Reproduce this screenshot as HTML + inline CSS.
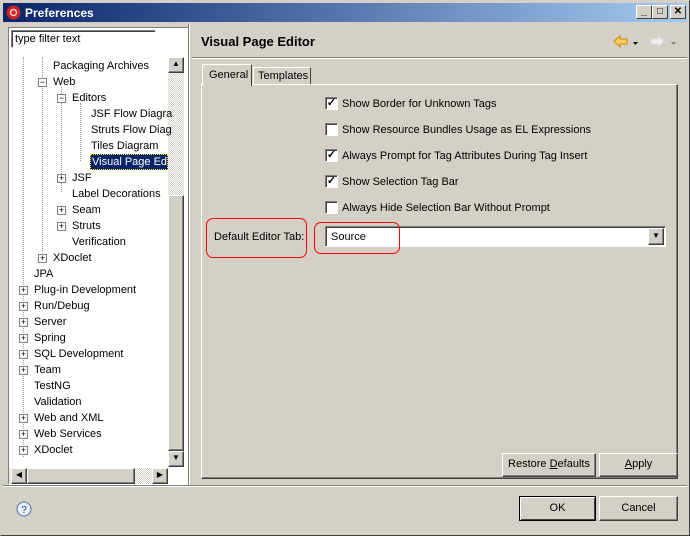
<!DOCTYPE html><html><head><style>
*{box-sizing:border-box;margin:0;padding:0}
body{width:690px;height:536px;background:#d4d0c8;font-family:"Liberation Sans",sans-serif;font-size:11px;color:#000;position:relative;overflow:hidden}
.a{position:absolute}
.win{left:0;top:0;width:690px;height:536px;border:1px solid #404040;border-top-color:#d4d0c8;border-left-color:#d4d0c8}
.tb{left:3px;top:3px;width:684px;height:19px;background:linear-gradient(90deg,#0a246a,#a6caf0)}
.tb span{position:absolute;left:22px;top:3px;color:#fff;font-weight:bold;font-size:12px}
.cb{top:5px;width:16px;height:14px;background:#d4d0c8;border:1px solid;border-color:#fff #404040 #404040 #fff;font-size:10px;text-align:center;line-height:12px;font-weight:bold}
.tree{left:8px;top:27px;width:181px;height:458px;background:#fff;border:1px solid;border-color:#808080 #fff #fff #808080}
.t{position:absolute;white-space:nowrap;font-size:11px;margin-top:2px}
.bx{position:absolute;width:9px;height:9px;border:1px solid #808080;background:#fff;font-size:9px;line-height:7px;text-align:center;margin-top:2px}
.btn{position:absolute;background:#d4d0c8;border:1px solid;border-color:#fff #404040 #404040 #fff;box-shadow:inset -1px -1px 0 #808080;text-align:center;line-height:21px;font-size:11px}
.chk{position:absolute;left:325px;width:13px;height:13px;background:#fff;border:1px solid;border-color:#808080 #fff #fff #808080;box-shadow:inset 1px 1px 0 #404040;font-size:11px;line-height:11px;text-align:center;font-weight:bold}
.lbl{position:absolute;left:342px;font-size:11px;margin-top:1px}
.red{position:absolute;border:1px solid #f00;border-radius:7px}
</style></head><body>
<div class="a win"></div>
<div class="a tb"><svg class="a" style="left:3px;top:2px" width="15" height="15"><circle cx="7.5" cy="7.5" r="7" fill="#c22"/><circle cx="7.5" cy="7.5" r="3" fill="none" stroke="#fcc" stroke-width="1.5"/></svg><span>Preferences</span></div>
<div class="a cb" style="left:636px">_</div><div class="a cb" style="left:652px">□</div><div class="a cb" style="left:670px">✕</div>
<div class="a tree">
<div class="a" style="left:2px;top:2px;width:145px;height:18px;border:1px solid;border-color:#808080 #fff #fff #808080;box-shadow:inset 1px 1px 0 #404040;padding:2px 3px">type filter text</div>
</div>
<div class="a" style="left:168px;top:57px;width:16px;height:410px;background:repeating-conic-gradient(#fff 0 25%,#d4d0c8 0 50%) 0 0/2px 2px"></div>
<div class="btn" style="left:168px;top:57px;width:16px;height:16px;line-height:12px;font-size:8px">▲</div>
<div class="btn" style="left:168px;top:195px;width:16px;height:256px"></div>
<div class="btn" style="left:168px;top:451px;width:16px;height:16px;line-height:12px;font-size:8px">▼</div>
<div class="a" style="left:9px;top:468px;width:159px;height:16px;background:repeating-conic-gradient(#fff 0 25%,#d4d0c8 0 50%) 0 0/2px 2px"></div>
<div class="btn" style="left:11px;top:468px;width:16px;height:16px;line-height:12px;font-size:8px">◀</div>
<div class="btn" style="left:27px;top:468px;width:108px;height:16px"></div>
<div class="btn" style="left:152px;top:468px;width:16px;height:16px;line-height:12px;font-size:8px">▶</div>
<div class="a" style="left:9px;top:57px;width:159px;height:410px;overflow:hidden">
<div style="position:absolute;left:14px;top:0;height:400px;border-left:1px dotted #999"></div>
<div style="position:absolute;left:33px;top:0;height:200px;border-left:1px dotted #999"></div>
<div style="position:absolute;left:52px;top:30px;height:105px;border-left:1px dotted #999"></div>
<div style="position:absolute;left:71px;top:46px;height:58px;border-left:1px dotted #999"></div>
</div>
<div class="t" style="left:53px;top:58px">Packaging Archives</div>
<div class="bx" style="left:38px;top:76px">−</div><div class="t" style="left:53px;top:74px">Web</div>
<div class="bx" style="left:57px;top:92px">−</div><div class="t" style="left:72px;top:90px">Editors</div>
<div class="t" style="left:91px;top:106px">JSF Flow Diagra</div>
<div class="t" style="left:91px;top:122px">Struts Flow Diag</div>
<div class="t" style="left:91px;top:138px">Tiles Diagram</div>
<div class="t" style="left:90px;top:152px;width:78px;background:#0a246a;color:#fff;padding:1px;border:1px dotted #ff0;overflow:hidden">Visual Page Edito</div>
<div class="bx" style="left:57px;top:172px">+</div><div class="t" style="left:72px;top:170px">JSF</div>
<div class="t" style="left:72px;top:186px">Label Decorations</div>
<div class="bx" style="left:57px;top:204px">+</div><div class="t" style="left:72px;top:202px">Seam</div>
<div class="bx" style="left:57px;top:220px">+</div><div class="t" style="left:72px;top:218px">Struts</div>
<div class="t" style="left:72px;top:234px">Verification</div>
<div class="bx" style="left:38px;top:252px">+</div><div class="t" style="left:53px;top:250px">XDoclet</div>
<div class="t" style="left:34px;top:266px">JPA</div>
<div class="bx" style="left:19px;top:284px">+</div><div class="t" style="left:34px;top:282px">Plug-in Development</div>
<div class="bx" style="left:19px;top:300px">+</div><div class="t" style="left:34px;top:298px">Run/Debug</div>
<div class="bx" style="left:19px;top:316px">+</div><div class="t" style="left:34px;top:314px">Server</div>
<div class="bx" style="left:19px;top:332px">+</div><div class="t" style="left:34px;top:330px">Spring</div>
<div class="bx" style="left:19px;top:348px">+</div><div class="t" style="left:34px;top:346px">SQL Development</div>
<div class="bx" style="left:19px;top:364px">+</div><div class="t" style="left:34px;top:362px">Team</div>
<div class="t" style="left:34px;top:378px">TestNG</div>
<div class="t" style="left:34px;top:394px">Validation</div>
<div class="bx" style="left:19px;top:412px">+</div><div class="t" style="left:34px;top:410px">Web and XML</div>
<div class="bx" style="left:19px;top:428px">+</div><div class="t" style="left:34px;top:426px">Web Services</div>
<div class="bx" style="left:19px;top:444px">+</div><div class="t" style="left:34px;top:442px">XDoclet</div>
<div class="a" style="left:188px;top:24px;width:2px;height:462px;border-left:1px solid #808080;border-right:1px solid #fff"></div>
<div class="a" style="left:201px;top:34px;font-weight:bold;font-size:13px">Visual Page Editor</div>
<svg class="a" style="left:612px;top:33px" width="68" height="16"><path d="M2 8 L8 3 L8 6 L15 6 L15 11 L8 11 L8 14 Z" fill="#fc6" stroke="#c80"/><path d="M21 9h5l-2.5 3z" fill="#000"/><path d="M52 8 L46 3 L46 6 L39 6 L39 11 L46 11 L46 14 Z" fill="#eee" stroke="#ddd"/><path d="M59 9h5l-2.5 3z" fill="#888"/></svg>
<div class="a" style="left:192px;top:57px;width:495px;height:2px;border-top:1px solid #808080;border-bottom:1px solid #fff"></div>
<div class="a" style="left:201px;top:84px;width:477px;height:395px;border:1px solid;border-color:#fff #404040 #404040 #fff;box-shadow:inset -1px -1px 0 #808080"></div>
<div class="a" style="left:202px;top:64px;width:50px;height:22px;background:#d4d0c8;border:1px solid;border-color:#fff #404040 transparent #fff;border-bottom:none;padding:4px 6px;border-radius:2px 2px 0 0">General</div>
<div class="a" style="left:253px;top:67px;width:58px;height:17px;border:1px solid;border-color:#fff #404040 transparent #fff;border-bottom:none;padding:2px 4px">Templates</div>
<div class="chk" style="top:97px">✓</div><div class="lbl" style="top:97px">Show Border for Unknown Tags</div>
<div class="chk" style="top:123px"></div><div class="lbl" style="top:123px">Show Resource Bundles Usage as EL Expressions</div>
<div class="chk" style="top:149px">✓</div><div class="lbl" style="top:149px">Always Prompt for Tag Attributes During Tag Insert</div>
<div class="chk" style="top:175px">✓</div><div class="lbl" style="top:175px">Show Selection Tag Bar</div>
<div class="chk" style="top:201px"></div><div class="lbl" style="top:201px">Always Hide Selection Bar Without Prompt</div>
<div class="a" style="left:214px;top:231px">Default Editor Tab:</div>
<div class="a" style="left:325px;top:226px;width:341px;height:21px;background:#fff;border:1px solid;border-color:#808080 #fff #fff #808080;box-shadow:inset 1px 1px 0 #404040;padding:4px 5px">Source</div>
<div class="btn" style="left:648px;top:228px;width:16px;height:17px;line-height:13px;font-size:8px">▼</div>
<div class="red" style="left:206px;top:218px;width:101px;height:40px"></div>
<div class="red" style="left:314px;top:222px;width:86px;height:32px"></div>
<div class="btn" style="left:502px;top:453px;width:94px;height:24px">Restore <u>D</u>efaults</div>
<div class="btn" style="left:599px;top:453px;width:79px;height:24px"><u>A</u>pply</div>
<div class="a" style="left:3px;top:485px;width:684px;height:2px;border-top:1px solid #808080;border-bottom:1px solid #fff"></div>
<svg class="a" style="left:16px;top:501px" width="16" height="16"><circle cx="8" cy="8" r="7" fill="#e8eef8" stroke="#5070a0"/><text x="8" y="12" font-size="10" text-anchor="middle" fill="#304880" font-family="Liberation Sans">?</text></svg>
<div class="btn" style="left:519px;top:496px;width:77px;height:25px;border:1px solid #000;box-shadow:inset 1px 1px 0 #fff,inset -1px -1px 0 #404040;line-height:23px">OK</div>
<div class="btn" style="left:599px;top:496px;width:79px;height:25px;line-height:23px">Cancel</div>
</body></html>
